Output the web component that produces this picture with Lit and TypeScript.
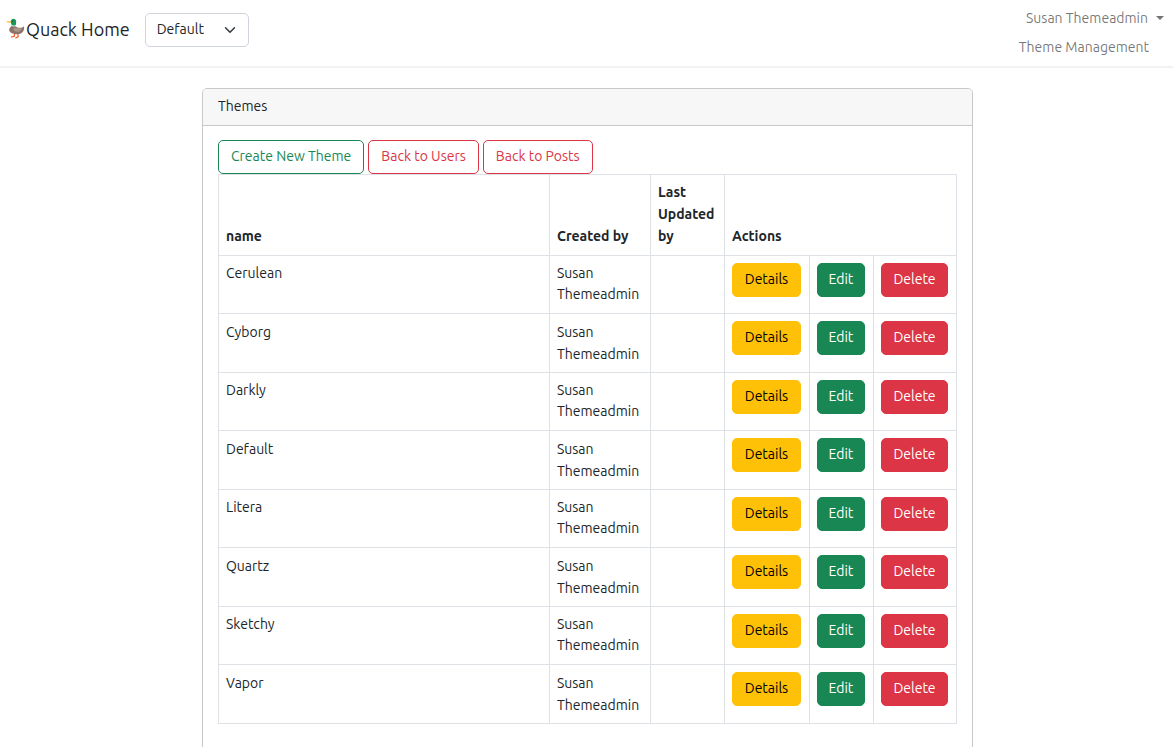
import { LitElement, html, css, svg } from "lit";
import { customElement, property, state } from "lit/decorators.js";

interface Theme {
  name: string;
  createdBy: string;
  updatedBy: string;
}

const THEME_NAMES = ["Cerulean", "Cyborg", "Darkly", "Default", "Litera", "Quartz", "Sketchy", "Vapor"];

const duck = svg`
  <path d="M8.6 15.5 8.2 18.4 5.6 18.8M11.8 15.5 12.2 18.6 9.8 20" fill="none" stroke="#f4612e" stroke-width="1.3" stroke-linecap="round" stroke-linejoin="round"/>
  <path d="M18 8.2C18.4 11.5 17.6 16.2 11 16.2 5.6 16.2 3 14.2 3.2 11.6 3.4 9.6 5 8.6 6 7.6L9.6 8.4C11.6 9.6 15.4 10.6 18 8.2Z" fill="#8d7268"/>
  <path d="M7.6 10.6C9.6 9.4 13.6 10.6 16 10.2 15.2 13 12.6 14.4 9.8 13.6 8 13 7 11.8 7.6 10.6Z" fill="#a8958c"/>
  <path d="M5.2 7 9.8 6.8 9.6 8C8.2 8.6 6.2 8.6 5.2 8Z" fill="#dfe5e8"/>
  <path d="M4.6 3.6C5 1.6 6.4.6 7.8.8 9.6 1 10.4 2.6 10.2 4.4L9.8 7C8.4 7.8 6.4 7.6 5.4 6.8 5.8 6.2 4.4 5.4 4.6 3.6Z" fill="#179a58"/>
  <path d="M4.8 3.2C3.6 3.4 2 3.2.6 3 .4 4.4 2.4 5.2 5 4.8Z" fill="#fdc43f"/>
  <circle cx="6.6" cy="3" r=".6" fill="#263238"/>`;

@customElement("theme-navbar")
class ThemeNavbar extends LitElement {
  @property({ attribute: false }) themes: string[] = [];
  @property() user = "";

  static styles = css`
    :host { display: block; }
    .bar {
      display: flex;
      align-items: flex-start;
      justify-content: space-between;
      box-sizing: border-box;
      min-height: 66px;
      padding: 4px 9px 4px 6px;
      background: #fff;
      box-shadow: 0 2px 1px rgba(0, 0, 0, 0.05);
    }
    .start { display: flex; align-items: center; gap: 15px; padding-top: 9px; }
    .brand { display: flex; align-items: center; padding-bottom: 2px; color: #212529; font-size: 18px; line-height: 27px; text-decoration: none; }
    .duck { width: 20px; height: 22px; }
    .picker {
      appearance: none;
      box-sizing: border-box;
      width: 104px;
      height: 34px;
      padding: 0 32px 2px 11px;
      border: 1px solid #ced4da;
      border-radius: 5px;
      color: #212529;
      font: inherit;
      background: #fff url("data:image/svg+xml,%3Csvg xmlns='http://www.w3.org/2000/svg' viewBox='0 0 16 16'%3E%3Cpath fill='none' stroke='%23343a40' stroke-linecap='round' stroke-linejoin='round' stroke-width='2' d='m2 5 6 6 6-6'/%3E%3C/svg%3E") no-repeat right 12px center / 12px 12px;
    }
    .links { display: flex; flex-direction: column; align-items: flex-end; gap: 7px; padding-top: 3px; }
    .link { display: flex; align-items: center; gap: 8px; color: rgba(0, 0, 0, 0.55); line-height: 22px; text-decoration: none; }
    .plain { padding-right: 15px; }
    .caret { border: 4px solid transparent; border-top-color: currentColor; border-bottom: 0; }
  `;

  render() {
    return html`
      <nav class="bar">
        <div class="start">
          <a class="brand" href="#home"><svg class="duck" viewBox="0 0 20 22" aria-hidden="true">${duck}</svg>Quack Home</a>
          <select class="picker" aria-label="Theme">
            ${this.themes.map((t) => html`<option ?selected=${t === "Default"}>${t}</option>`)}
          </select>
        </div>
        <div class="links">
          <a class="link" href="#account">${this.user}<span class="caret"></span></a>
          <a class="link plain" href="#themes">Theme Management</a>
        </div>
      </nav>
    `;
  }
}

@customElement("app-root")
class AppRoot extends LitElement {
  @state() private user = "Susan Themeadmin";
  @state() private themes: Theme[] = THEME_NAMES.map((name) => ({ name, createdBy: "Susan Themeadmin", updatedBy: "" }));

  static styles = css`
    :host {
      display: block;
      color: #212529;
      background: #fff;
      font-family: Ubuntu, "Noto Sans", sans-serif;
      font-size: 14px;
      line-height: 22px;
    }
    .page { padding: 22px 14px 22px 16px; }
    .card {
      box-sizing: border-box;
      max-width: 771px;
      margin: 0 auto;
      border: 1px solid #c8c8c8;
      border-radius: 5px;
      background: #fff;
    }
    .head {
      margin: 0;
      padding: 6px 15px 8px;
      border-bottom: 1px solid #c8c8c8;
      border-radius: 4px 4px 0 0;
      background: #f7f7f7;
      font-size: inherit;
      font-weight: 400;
    }
    .body { padding: 14px 15px; }
    .toolbar { display: flex; flex-wrap: wrap; gap: 4px; }
    .btn {
      box-sizing: border-box;
      height: 34px;
      padding: 0 12px 2px;
      border: 1px solid;
      border-radius: 5px;
      background: none;
      font: inherit;
      text-align: center;
      text-decoration: none;
      white-space: nowrap;
      cursor: pointer;
    }
    .line { padding-top: 4px; }
    .line-success { color: #198754; }
    .line-danger { color: #dc3545; }
    .fill { display: block; width: 100%; padding: 0 0 2px; }
    .warning { color: #000; background: #ffc107; border-color: #ffc107; }
    .success { color: #fff; background: #198754; border-color: #198754; }
    .danger { color: #fff; background: #dc3545; border-color: #dc3545; }
    .table { width: 100%; margin-bottom: 14px; border-collapse: collapse; table-layout: fixed; }
    .table th, .table td { padding: 7px 8px 7px 7px; border: 1px solid #dee2e6; text-align: left; }
    .table th { height: 66px; padding-top: 6px; padding-bottom: 8px; vertical-align: bottom; font-weight: 700; }
    .table td { height: 43px; vertical-align: top; }
    .row { line-height: 21px; }
    .row:nth-child(even) { line-height: 22px; }
    .col-by { width: 101px; }
    .col-updated { width: 74px; }
    .col-details { width: 85px; }
    .col-edit { width: 64px; }
    .col-delete { width: 83px; }
  `;

  render() {
    return html`
      <theme-navbar .themes=${this.themes.map((t) => t.name)} .user=${this.user}></theme-navbar>
      <main class="page">
        <section class="card">
          <h1 class="head">Themes</h1>
          <div class="body">
            <div class="toolbar">
              <a class="btn line line-success" href="#create">Create New Theme</a>
              <a class="btn line line-danger" href="#users">Back to Users</a>
              <a class="btn line line-danger" href="#posts">Back to Posts</a>
            </div>
            <table class="table">
              <colgroup>
                <col /><col class="col-by" /><col class="col-updated" />
                <col class="col-details" /><col class="col-edit" /><col class="col-delete" />
              </colgroup>
              <thead>
                <tr>
                  <th scope="col">name</th>
                  <th scope="col">Created by</th>
                  <th scope="col">Last Updated by</th>
                  <th scope="colgroup" colspan="3">Actions</th>
                </tr>
              </thead>
              <tbody>
                ${this.themes.map(
                  (t) => html`<tr class="row">
                    <td>${t.name}</td>
                    <td>${t.createdBy}</td>
                    <td>${t.updatedBy}</td>
                    <td><button class="btn fill warning" type="button">Details</button></td>
                    <td><button class="btn fill success" type="button">Edit</button></td>
                    <td><button class="btn fill danger" type="button">Delete</button></td>
                  </tr>`
                )}
              </tbody>
            </table>
          </div>
        </section>
      </main>
    `;
  }
}
